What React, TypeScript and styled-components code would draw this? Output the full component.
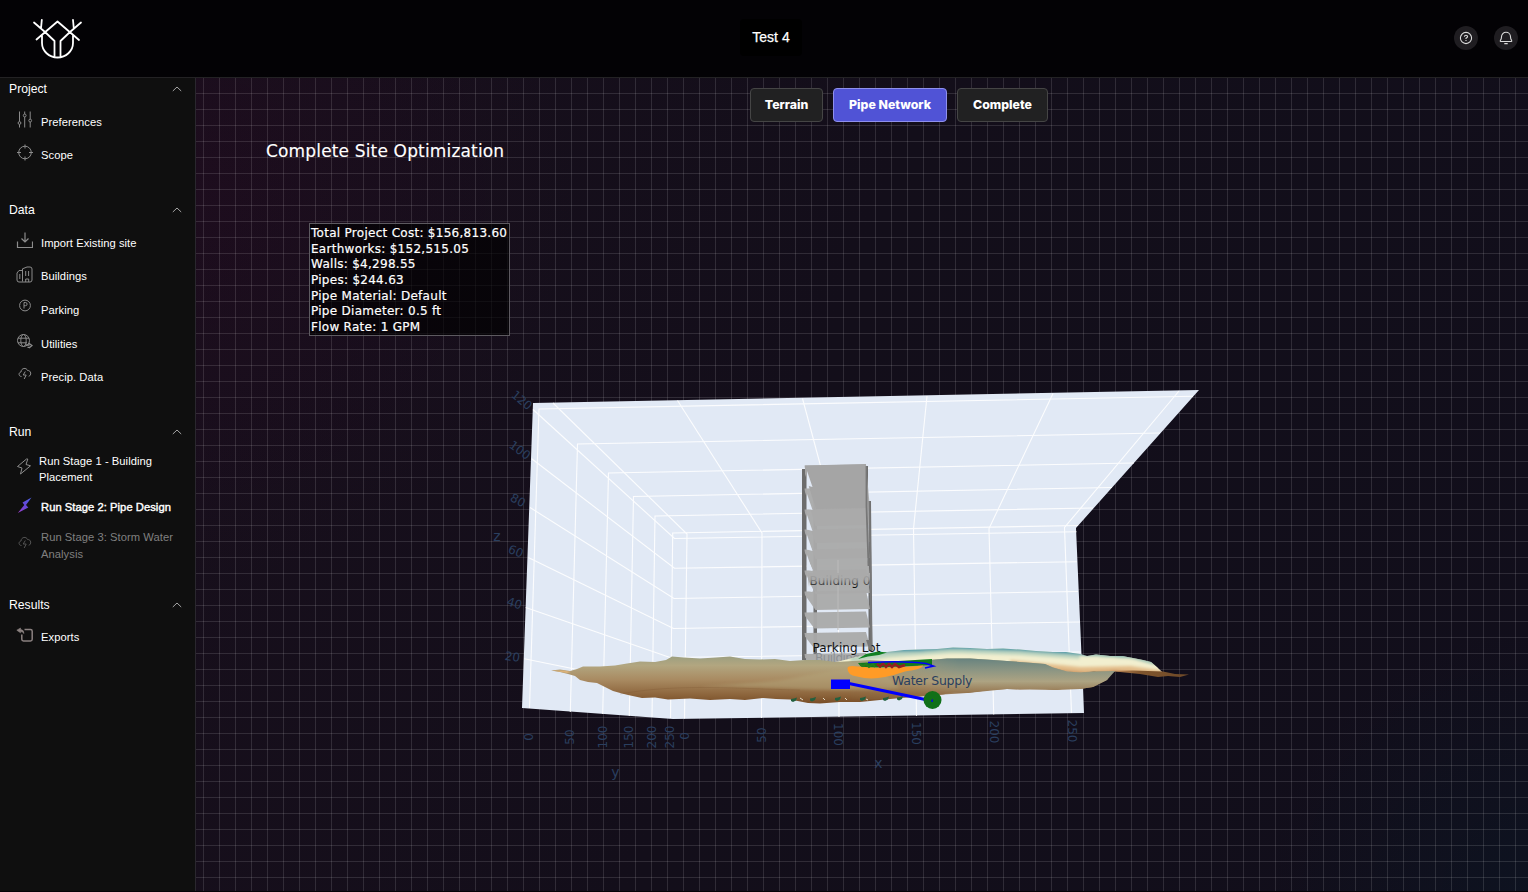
import React from 'react';
import styled, { createGlobalStyle, css } from 'styled-components';

const GlobalStyle = createGlobalStyle`
  * { box-sizing: border-box; }
  body { margin: 0; background: #000; overflow: hidden; }
`;

const Page = styled.div`
  display: grid;
  grid-template: 78px 813px / 196px 1fr;
  width: 1528px;
  height: 892px;
  background: #050308;
  color: #fff;
  font-family: 'Liberation Sans', Arial, sans-serif;
`;

const Header = styled.header`
  grid-column: 1 / -1;
  display: grid;
  grid-template-columns: 708px 62px 1fr;
  align-items: center;
  padding: 0 10px 3px 32px;
  background: #030205;
  border-bottom: 1px solid #232224;
`;

const Logo = styled.svg`
  width: 52px;
  height: 44px;
  margin-top: 3px;
`;

const ProjectName = styled.div`
  display: flex;
  align-items: center;
  justify-content: center;
  height: 37px;
  border-radius: 4px;
  background: #000;
  font-size: 14px;
  white-space: nowrap;
  -webkit-text-stroke: 0.25px #fff;
`;

const HeaderActions = styled.div`
  display: flex;
  justify-content: flex-end;
  gap: 16px;
  margin-top: 1px;
`;

const RoundButton = styled.button`
  display: flex;
  align-items: center;
  justify-content: center;
  width: 24px;
  height: 24px;
  padding: 0;
  border: 0;
  border-radius: 50%;
  background: #1f1d21;
  color: #dcdcdc;
`;

const Sidebar = styled.nav`
  display: flex;
  flex-direction: column;
  background: #0f0f0f;
  border-right: 1px solid #2a272e;
`;

const Section = styled.section<{ $gap: number }>`
  margin-bottom: ${(p) => p.$gap}px;
`;

const SectionHeader = styled.div<{ $gap: number }>`
  display: flex;
  align-items: center;
  justify-content: space-between;
  height: 21px;
  margin-bottom: ${(p) => p.$gap}px;
  padding: 0 13px 0 9px;
  font-size: 12.2px;
`;

const NavItem = styled.div<{ $height: number; $state?: 'active' | 'disabled'; $before?: number }>`
  display: flex;
  align-items: center;
  height: ${(p) => p.$height}px;
  margin-top: ${(p) => p.$before ?? 0}px;
  padding-left: 16px;
  font-size: 11.2px;
  letter-spacing: 0.05px;
  color: ${(p) => (p.$state === 'disabled' ? '#808080' : '#fff')};
  ${(p) => p.$state === 'active' && css`-webkit-text-stroke: 0.4px #fff;`}
`;

const NavIcon = styled.span<{ $lift: number; $width: number; $dim?: boolean }>`
  display: flex;
  flex: none;
  width: ${(p) => p.$width}px;
  margin-bottom: ${(p) => p.$lift * 2}px;
  color: #8c8c8c;
  opacity: ${(p) => (p.$dim ? 0.55 : 1)};
`;

const NavLabel = styled.span<{ $line: number }>`
  line-height: ${(p) => p.$line}px;
  white-space: pre-line;
`;

const Main = styled.main`
  display: flex;
  flex-direction: column;
  align-items: flex-start;
  min-width: 0;
  background:
    repeating-linear-gradient(90deg, transparent 0 7px, rgba(255, 255, 255, 0.12) 7px 8px, transparent 8px 16px),
    repeating-linear-gradient(180deg, transparent 0 15px, rgba(255, 255, 255, 0.12) 15px 16px),
    radial-gradient(circle at 0% 15%, rgba(60, 0, 40, 0.15), transparent 380px),
    radial-gradient(circle at 100% 100%, rgba(0, 35, 50, 0.22), transparent 260px),
    linear-gradient(110deg, #180f1c 0%, #130e1a 45%, #110e1b 100%);
`;

const StageTabs = styled.div`
  display: flex;
  gap: 10px;
  margin: 10px 0 0 554px;
`;

const StageTab = styled.button<{ $width: number; $active?: boolean }>`
  width: ${(p) => p.$width}px;
  height: 34px;
  padding: 0 0 2px;
  border: 1px solid ${(p) => (p.$active ? '#8f90ec' : '#454545')};
  border-radius: 4px;
  background: ${(p) => (p.$active ? '#5053d6' : '#212122')};
  color: #fff;
  font: 800 12.3px Inter, sans-serif;
  white-space: nowrap;
`;

const PlotTitle = styled.h1`
  height: 22px;
  margin: 18px 0 0 70px;
  font: 400 17px/22px 'DejaVu Sans', Verdana, sans-serif;
  letter-spacing: 0.16px;
  white-space: nowrap;
  -webkit-text-stroke: 0.15px #fff;
`;

const CostSummary = styled.div`
  width: 201px;
  height: 113px;
  margin: 61px 0 0 113px;
  padding: 2px 1px 0;
  border: 1px solid #5d5a60;
  background: rgba(0, 0, 0, 0.65);
  font: 400 12px/15.65px 'DejaVu Sans', Verdana, sans-serif;
  letter-spacing: 0.28px;
  white-space: nowrap;
  -webkit-text-stroke: 0.2px #fff;
`;

const Plot = styled.svg`
  display: block;
  width: 1332px;
  height: 539px;
  margin-top: 16px;
  font-family: 'DejaVu Sans', Verdana, sans-serif;
`;

const Icon = ({ size = 17, children }: { size?: number; children: React.ReactNode }) => (
  <svg width={size} height={size} viewBox="0 0 17 17" fill="none" stroke="currentColor" strokeWidth="1">
    {children}
  </svg>
);

const Chevron = () => (
  <svg width="10" height="6" viewBox="0 0 10 6" fill="none" stroke="#a5a5a5" strokeWidth="1">
    <path d="M.8 5 5 1l4.200 4" />
  </svg>
);

const storm = (
  <Icon>
    <path d="M5.500 11.500C2.500 11.500 2.200 7.500 5 7 5.200 2.800 10.500 2.300 11.500 5.500c3.800-.3 4.300 5 1.200 5.800M9.300 6.500 7.200 10h3l-2 4" />
  </Icon>
);

const icons = {
  sliders: (
    <Icon>
      <path d="M3.500 .5v10M3.500 13.500v3M8.700 .5v2.500M8.700 6v10.500M14.200 .5v7.500M14.200 11v5.500" />
      <circle cx="3.500" cy="12" r="1.400" /><circle cx="8.700" cy="4.500" r="1.400" /><circle cx="14.200" cy="9.600" r="1.400" />
    </Icon>
  ),
  target: <Icon><circle cx="9" cy="8.500" r="6.300" /><path d="M9 .5v4M9 12.500v4M1 8.500h4M13 8.500h4" /></Icon>,
  download: <Icon><path d="M1.500 9.500v6h15v-6M9 .5v9M5.500 6.500 9 10l3.500-3.500" strokeWidth="1.2" /></Icon>,
  buildings: (
    <Icon>
      <path d="M6.500 15.500V2.800L11 1h3q2 0 2 2v11q0 2-2 2H3q-2 0-2-2V7l2-2.500h3.500M3.800 8v5M9.700 5v5M12.600 5v5M9.700 16v-3h3v3" />
    </Icon>
  ),
  parking: <Icon><circle cx="9" cy="8.500" r="5.400" /><path d="M8 11.500v-6h1.500a1.500 1.500 0 0 1 0 3.200H8" /></Icon>,
  utilities: (
    <Icon>
      <circle cx="7.500" cy="7.500" r="6" /><ellipse cx="7.500" cy="7.500" rx="2.700" ry="6" />
      <path d="M2 5.200h11M2 9.800h9" /><path d="M9.500 12h4M12.500 10l3.500 2.500-3 2.500M11.500 14.300h3" strokeWidth="1.300" />
    </Icon>
  ),
  storm,
  bolt: <Icon><path d="M10.500 1 1.500 8.500 6 10 4.500 16 14.500 7.800 10 6.500 11.800 1Z" strokeLinejoin="round" /></Icon>,
  boltFilled: (
    <Icon>
      <defs>
        <linearGradient id="bolt" x1="1" y1="0" x2="0" y2="1">
          <stop offset="0" stopColor="#4a62e8" /><stop offset=".5" stopColor="#6647d8" /><stop offset="1" stopColor="#a03ec8" />
        </linearGradient>
      </defs>
      <path d="M15.500 .5 6.500 5.500 8.300 8 1.800 16 12.300 10.500 10 8Z" fill="url(#bolt)" stroke="none" />
    </Icon>
  ),
  exports: (
    <Icon>
      <path d="M8.500 2.500h6q1.700 0 1.700 1.700v8.100q0 1.700-1.700 1.700h-7q-1.700 0-1.700-1.700V7.500" stroke="#8b8180" strokeWidth="1.500" />
      <path d="M.8 3.200 4.500 1v1.500q3.500.3 3.500 4Q6.500 4.500 4.500 4.500V5.800Z" fill="#8b8180" stroke="#8b8180" strokeWidth=".6" />
    </Icon>
  ),
};

interface Item {
  label: string;
  icon: keyof typeof icons;
  height: number;
  lift: number;
  before?: number;
  line?: number;
  iconWidth?: number;
  state?: 'active' | 'disabled';
}

const sections: { title: string; gap: number; after: number; items: Item[] }[] = [
  {
    title: 'Project', gap: 6, after: 28,
    items: [
      { label: 'Preferences', icon: 'sliders', height: 33, lift: 2 },
      { label: 'Scope', icon: 'target', height: 33, lift: 2 },
    ],
  },
  {
    title: 'Data', gap: 6, after: 28,
    items: [
      { label: 'Import Existing site', icon: 'download', height: 33, lift: 2 },
      { label: 'Buildings', icon: 'buildings', height: 34, lift: 2 },
      { label: 'Parking', icon: 'parking', height: 34, lift: 5 },
      { label: 'Utilities', icon: 'utilities', height: 33, lift: 2 },
      { label: 'Precip. Data', icon: 'storm', height: 33, lift: 3 },
    ],
  },
  {
    title: 'Run', gap: 10, after: 31,
    items: [
      { label: 'Run Stage 1 - Building\nPlacement', icon: 'bolt', height: 33, lift: 2.5, line: 16, iconWidth: 23 },
      { label: 'Run Stage 2: Pipe Design', icon: 'boltFilled', height: 34, lift: 1.5, before: 5, state: 'active' },
      { label: 'Run Stage 3: Storm Water\nAnalysis', icon: 'storm', height: 35, lift: 3.5, before: 4, line: 17, state: 'disabled' },
    ],
  },
  { title: 'Results', gap: 5, after: 0, items: [{ label: 'Exports', icon: 'exports', height: 34, lift: 1.5 }] },
];

const costs = [
  'Total Project Cost: $156,813.60',
  'Earthworks: $152,515.05',
  'Walls: $4,298.55',
  'Pipes: $244.63',
  'Pipe Material: Default',
  'Pipe Diameter: 0.5 ft',
  'Flow Rate: 1 GPM',
];

type Tick = [text: string, x: number, y: number, angle: number];
const ticks: Tick[] = [
  ['120', 522, 400, 40], ['100', 520, 450, 36], ['80', 518, 500, 28], ['60', 516, 551, 22], ['40', 514.5, 603, 17], ['20', 512.5, 656.5, 9],
  ['0', 528.5, 737, -90], ['50', 569.5, 737, -90], ['100', 602.5, 737, -90], ['150', 629, 737, -90], ['200', 651.5, 737, -90], ['250', 670, 737, -90],
  ['0', 684.5, 736, -90], ['50', 762, 735, -90], ['100', 838.5, 734.5, 90], ['150', 916, 733.5, 90], ['200', 994, 732, 90], ['250', 1072, 731, 90],
];

const gridLines = [
  // floor-to-ceiling lines of the left wall, continued over the ceiling
  'M529.500 708 539 409 1193 396.300', 'M570.300 712 577.500 444 1160 433', 'M602.700 714 608.500 473 1134 463',
  'M629.300 716 633.500 496.500 1112 487.500', 'M652 717 655 516 1093 508', 'M670.500 718 672.700 533 1078 525.500',
  // ceiling lines that run down the back wall
  'M553 403 687 534 684.500 718.500', 'M677.500 400.500 762 533 761.500 718', 'M802.500 398.500 838 531 839 717',
  'M927 396 913.500 529 916.500 716', 'M1053 393.500 989 528.500 993.700 714.500', 'M1179 391 1064.500 527.500 1071.500 713',
  // heights, round the left and the back wall
  'M533 409.500 674.500 538.500 1076.500 531.700', 'M531.700 458.700 674.500 568.300 1077 561.700', 'M530 507.500 674 598.500 1078 591.500',
  'M528.300 557.500 673.500 628.500 1080 622', 'M525.700 607.500 670 657.500 1081 652', 'M524.300 658.700 668 688',
];

const slabs = [
  [465, 45], [488, 38], [509, 34], [529, 30], [549, 27], [570, 24], [591, 19], [612, 16.5], [632.5, 15], [653.5, 12],
];

const backHill =
  'M836 662 857 657 872 654 887 652 904 650 920 649.500 937 649 953 647.500 970 648 987 649 1003 648.500 1020 649.500 1036 651 1053 652 1066 652 1080 654 1087 656 1096 654.500 1110 656 1122 656 1133 658 1143 660 1151 662 1157 667 1163 673 1150 674 1133 672 1115 671 1096 671 1080 673 1060 671 1040 672 836 672Z';

const SitePlot = () => (
  <Plot viewBox="196 352 1332 539">
    <defs>
      <linearGradient id="front" gradientUnits="userSpaceOnUse" x1="0" y1="656" x2="0" y2="703">
        <stop offset="0" stopColor="#9c9f80" /><stop offset=".2" stopColor="#b2a680" /><stop offset=".5" stopColor="#a98b62" />
        <stop offset=".8" stopColor="#8f683f" /><stop offset="1" stopColor="#7a4f28" />
      </linearGradient>
      <linearGradient id="hill" gradientUnits="userSpaceOnUse" x1="0" y1="658" x2="0" y2="694">
        <stop offset="0" stopColor="#66827f" /><stop offset=".35" stopColor="#8d9683" /><stop offset=".65" stopColor="#ada382" />
        <stop offset="1" stopColor="#93714a" />
      </linearGradient>
      <linearGradient id="hillFade" gradientUnits="userSpaceOnUse" x1="850" y1="0" x2="960" y2="0">
        <stop offset="0" stopColor="#000" /><stop offset="1" stopColor="#fff" />
      </linearGradient>
      <mask id="hillMask" maskUnits="userSpaceOnUse" x="840" y="640" width="300" height="70">
        <rect x="840" y="640" width="300" height="70" fill="url(#hillFade)" />
      </mask>
      <clipPath id="backClip"><path d={backHill} /></clipPath>
      <filter id="soft" x="-10%" y="-100%" width="120%" height="300%"><feGaussianBlur stdDeviation="1.800" /></filter>
      <linearGradient id="tail" x1="0" y1="0" x2="1" y2="0">
        <stop offset="0" stopColor="#c99361" /><stop offset=".4" stopColor="#80552d" /><stop offset="1" stopColor="#6e4928" />
      </linearGradient>
      <linearGradient id="haze" gradientUnits="userSpaceOnUse" x1="0" y1="573" x2="0" y2="587">
        <stop offset="0" stopColor="#aaa" /><stop offset=".45" stopColor="#aaa" stopOpacity=".85" /><stop offset="1" stopColor="#aaa" stopOpacity="0" />
      </linearGradient>
    </defs>

    <path d="M533 403 1199 390 1076 528 1084 713 673 719 522 708Z" fill="#e1e9f5" />
    <g fill="none" stroke="#fff" strokeWidth="1.1" opacity=".9">
      {gridLines.map((d) => <path key={d} d={d} />)}
    </g>

    <path d="M802 469h4.500v191h-4.500ZM866 466h2v40h-2ZM868.500 501h2.500l1.500 150h-4ZM813.500 500h3.500v155h-3.500Z" fill="#6c6c6c" />
    {slabs.map(([y, depth]) => (
      <path
        key={y}
        d={`M804.500 ${y + 0.5} 866 ${y - 0.5} 870 ${y + depth - 1} ${804.5 + Math.min(11, depth * 0.6)} ${y + depth} 805 ${y + 4}Z`}
        fill="#aaa"
        opacity=".96"
      />
    ))}
    <path d="M805 465.500 866 464v44l-50 1-11-35Z" fill="#a5a5a5" />
    <g fill="#e1e9f5">
      {slabs.slice(0, 6).map(([y]) => <path key={y} d={`M807 ${y + 6}v14.500l5.500 1.500Z`} />)}
    </g>
    <path d="M866.500 466v40l2 60M869.500 501l2 149" stroke="#777" strokeWidth="1.800" fill="none" />
    <path d="M838 560v70" stroke="#bbb" strokeWidth="1" />

    <text x="809.500" y="585" fontSize="12" textLength="61" fill="#111">Building 0</text>
    <path d="M808 573h62v14h-62Z" fill="url(#haze)" />
    <text x="815" y="662" fontSize="12" textLength="45" fill="#8b8f93">Building</text>
    <text x="812.500" y="652" fontSize="12" textLength="68" fill="#111">Parking Lot</text>
    <path d="M866 640h4.500l2 10h-3Z" fill="#777" />

    <path d={backHill} fill="#f2efcf" />
    <g clipPath="url(#backClip)" fill="none" filter="url(#soft)">
      <path d="M850 657 887 652 953 647.500 1020 649.500 1080 653.500" stroke="#bcd4c0" strokeWidth="11" />
      <path d="M880 650 920 649 953 646.500 1020 648.500 1080 652.500 1133 655.500" stroke="#4a99a8" strokeWidth="5" />
      <path d="M1090 654 1133 657 1155 663" stroke="#8db9ae" strokeWidth="3" />
      <path d="M1010 664 1050 668 1080 671 1130 670 1165 675" stroke="#e3bd8a" strokeWidth="8" />
      <path d="M1030 667 1055 671 1085 674 1115 672 1165 676" stroke="#c58d5a" strokeWidth="3" />
    </g>
    <path d="M1108 671 1133 670.500 1163 671.500 1175 674 1189 674.500 1180 677 1168 676 1158 677 1140 674 1120 672Z" fill="url(#tail)" />

    <path d="M551 670.500 560 669.500 570 671 577 669 583 666.500 600 666.500 615 665.500 627 663.500 640 661.500 655 662 666 660 672 656.500 684 657.500 700 658.500 716 657.500 730 656.500 745 659 760 659.500 775 659 790 661 805 660 820 660 836 662 870 660 900 662 920 661 934 659.500 947 658.500 970 658.500 987 659.500 1007 661 1033 663 1045 664 1053 667.500 1067 671.500 1080 672.500 1096 671 1115 671 1110 675 1107 680 1101 683 1093 687 1080 689 1068 688 1056 690 1040 688.500 1020 689.500 1007 689 990 690 967 693 955 692 943 694.500 920 696.500 900 698 880 700 860 702 840 702 820 703.500 808 703 790 699.500 776 699 763 698 745 700 730 699 710 700 690 698.500 668 699.500 655 697.500 642 698 628 695 622 693.500 613 691 605 687 597 683 588 682 580 680 575 676 568 674 560 672Z" fill="url(#front)" />
    <path d="M845 661 900 662 920 661 947 658.500 970 658.500 1007 661 1033 663 1045 664 1053 667.500 1067 671.500 1080 672.500 1115 671 1107 680 1093 687 1080 689 1056 690 1007 689 967 693 943 694.500 900 698 850 700Z" fill="url(#hill)" mask="url(#hillMask)" />
    <path d="M700 687C740 683 770 683 798 677 830 671 850 667 880 668L900 688C830 694 750 684 700 687Z" fill="#b4a67b" opacity=".5" filter="url(#soft)" />
    <path d="M620 694C680 683 740 689 800 690" stroke="#744c29" strokeWidth="1" fill="none" opacity=".2" />
    <path d="M552 670.500h12l7 1.500-4 1Z" fill="#dcb27a" />

    <g fill="#23603f">
      {[[794, 700], [813, 699.5], [838, 699], [863, 699], [886, 699], [900, 698.5]].map(([x, y]) => (
        <path key={x} d={`M${x - 3} ${y - 1}l3-.5 3-1-1 3-3 1.500-2-1Z`} />
      ))}
    </g>
    <path d="m800 698 3 2m20-2 2 2m20-2 2 2m19-1 2 1" stroke="#e6dcc8" strokeWidth="1" />

    <path d="M858 659 866 654 878 651.500 887 652.500 879 655 868 656.500Z" fill="#118022" />
    <path d="M858 663 890 661.500 915 660 932 659v6l-20 1-50 2Z" fill="#127a1c" />
    <path d="M847.500 668Q848 665 858 666.500L880 668 905 667 923 665.500Q923 669 905 671.500 895 675 885 677 870 680 857 676.500 847 675 847.500 668Z" fill="#ff9b26" />
    <path d="m860 664 3 2 3-2 3 3 4-3 2 3" fill="none" stroke="#267c1c" strokeWidth="2" />
    <path d="m877 664 3 2.500 3-3 3 3.500 3-3 3 3 3-3 4 3 6-2" fill="none" stroke="#93211f" strokeWidth="2.500" />
    <path d="M868 662.500Q905 660.500 926 663.500L933.500 666 925 668" fill="none" stroke="#0000fa" strokeWidth="1.600" />

    <path d="M831 679.500h19v9.500h-19Z" fill="#0000ff" />
    <path d="M849 683.500 930 700.500" stroke="#0000ff" strokeWidth="3" />
    <circle cx="932.500" cy="700" r="9" fill="#107018" />
    <path d="M931.300 700 933 699v3h-1.700Z" fill="#0712c8" />
    <text x="892" y="685" fontSize="12.500" textLength="80.500" fill="#2a3f5f">Water Supply</text>

    <g fill="#2a3f5f" textAnchor="middle" fontSize="12">
      {ticks.map(([text, x, y, angle]) => (
        <text key={`${x}-${y}`} transform={`translate(${x} ${y}) rotate(${angle})`} y="4.400">{text}</text>
      ))}
      <g fontSize="14">
        <text x="497" y="541">z</text>
        <text x="615.500" y="777">y</text>
        <text x="878.500" y="768">x</text>
      </g>
    </g>
  </Plot>
);

export default function App() {
  return (
    <Page>
      <GlobalStyle />
      <Header>
        <Logo viewBox="32 17 52 44" fill="none" stroke="#fff" strokeWidth="1.800" strokeLinecap="round" strokeLinejoin="round">
          <path d="M34 22.500 45 32l9.500 9v16M81 22.500 70 32l-9.500 9v16M36.500 39.500 57.500 21.500 79 40M41.800 20 41 28.500M73 20l.8 8.500M42 35.500V43C42 51 49 57.500 57.500 57.500S73 51 73 43V35.500" />
        </Logo>
        <ProjectName>Test 4</ProjectName>
        <HeaderActions>
          <RoundButton aria-label="Help">
            <svg width="14" height="14" viewBox="0 0 14 14" fill="none" stroke="currentColor" strokeWidth="1.100">
              <circle cx="7" cy="7" r="5.600" />
              <path d="M5.400 5.700Q5.500 4.200 7 4.200T8.600 5.600Q8.600 6.500 7 7.200v.9M7 9v1" />
            </svg>
          </RoundButton>
          <RoundButton aria-label="Notifications">
            <svg width="14" height="14" viewBox="0 0 14 14" fill="none" stroke="currentColor" strokeWidth="1.100">
              <path d="M1.800 10.500Q.8 10.300 1.500 9.200 2.500 8 2.500 5.800a4.500 4.500 0 0 1 9 0Q11.500 8 12.500 9.200 13.200 10.300 12.200 10.500ZM5.300 12.600h3.400" strokeLinejoin="round" />
            </svg>
          </RoundButton>
        </HeaderActions>
      </Header>

      <Sidebar>
        {sections.map((s) => (
          <Section key={s.title} $gap={s.after}>
            <SectionHeader $gap={s.gap}>{s.title}<Chevron /></SectionHeader>
            {s.items.map((i) => (
              <NavItem key={i.label} $height={i.height} $before={i.before} $state={i.state}>
                <NavIcon $lift={i.lift} $width={i.iconWidth ?? 25} $dim={i.state === 'disabled'}>{icons[i.icon]}</NavIcon>
                <NavLabel $line={i.line ?? 16}>{i.label}</NavLabel>
              </NavItem>
            ))}
          </Section>
        ))}
      </Sidebar>

      <Main>
        <StageTabs>
          <StageTab $width={73}>Terrain</StageTab>
          <StageTab $width={114} $active>Pipe Network</StageTab>
          <StageTab $width={91}>Complete</StageTab>
        </StageTabs>
        <PlotTitle>Complete Site Optimization</PlotTitle>
        <CostSummary>{costs.map((c) => <div key={c}>{c}</div>)}</CostSummary>
        <SitePlot />
      </Main>
    </Page>
  );
}
